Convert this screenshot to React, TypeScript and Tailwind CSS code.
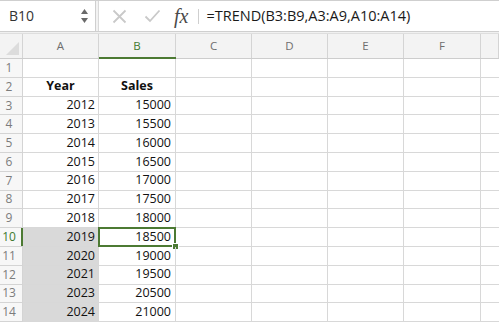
import React from "react";

const cols = ["A", "B", "C", "D", "E", "F", ""];
const colW = ["w-[76px]", "w-[77px]", "w-[76px]", "w-[76px]", "w-[76px]", "w-[77px]", "flex-1"];

const data: [string, string][] = [
  ["", ""],
  ["Year", "Sales"],
  ["2012", "15000"],
  ["2013", "15500"],
  ["2014", "16000"],
  ["2015", "16500"],
  ["2016", "17000"],
  ["2017", "17500"],
  ["2018", "18000"],
  ["2019", "18500"],
  ["2020", "19000"],
  ["2021", "19500"],
  ["2023", "20500"],
  ["2024", "21000"],
];

export default function App() {
  return (
    <div className="w-[499px] h-[324px] overflow-hidden bg-white font-['Open_Sans',sans-serif] text-[#222]">
      {/* formula bar */}
      <div className="flex h-[32px] border-t border-b border-[#cfcfcf]">
        <div className="w-[96px] flex items-center justify-between pl-[9px] pr-[6px] border-r border-[#cfcfcf]">
          <span className="text-[14px] text-[#333] leading-none">B10</span>
          <svg width="9" height="18" viewBox="0 0 9 18">
            <path d="M4.5 2 L8 7 L1 7 Z" fill="#6a6a6a" />
            <path d="M1 11 L8 11 L4.5 16 Z" fill="#6a6a6a" />
          </svg>
        </div>
        <div className="w-[3px] bg-[#f2f2f2] border-r border-[#d9d9d9]" />
        <div className="flex-1 flex items-center">
          <svg className="ml-[13px]" width="15" height="15" viewBox="0 0 15 15">
            <path d="M1.5 1.5 L13.5 13.5 M13.5 1.5 L1.5 13.5" stroke="#c9c9c9" strokeWidth="1.8" fill="none" />
          </svg>
          <svg className="ml-[17px]" width="17" height="14" viewBox="0 0 17 14">
            <path d="M1.5 7.5 L6 12 L15.5 1.5" stroke="#c9c9c9" strokeWidth="1.8" fill="none" />
          </svg>
          <span className="ml-[13px] font-['Liberation_Serif',serif] italic text-[20px] text-[#4a4a4a] leading-none">fx</span>
          <div className="ml-[10px] w-px h-[15px] bg-[#cfcfcf]" />
          <span className="ml-[7px] text-[14.5px] leading-none text-[#1a1a1a]">=TREND(B3:B9,A3:A9,A10:A14)</span>
        </div>
      </div>
      <div className="h-[2px] bg-[#f0f0f0] border-b border-[#dedede]" />
      {/* header row */}
      <div className="flex h-[25px] bg-[#f3f3f3] border-b border-[#cdcdcd]">
        <div className="w-[23px] relative border-r border-[#d4d4d4]">
          <svg className="absolute right-[3px] bottom-[3px]" width="13" height="13" viewBox="0 0 13 13">
            <path d="M13 0 L13 13 L0 13 Z" fill="#dcdcdc" />
          </svg>
        </div>
        {cols.map((c, i) => (
          <div
            key={i}
            className={`${colW[i]} relative flex items-center justify-center text-[11.5px] border-r border-[#d4d4d4] ${c === "B" ? "text-[#3f7a2f]" : "text-[#6e6e6e]"}`}
          >
            {c}
            {c === "B" && <div className="absolute left-0 right-[-1px] bottom-[-1px] h-[2px] bg-[#4c7a33]" />}
          </div>
        ))}
      </div>
      {/* rows */}
      {data.map(([a, b], r) => {
        const rowNum = r + 1;
        const selRow = rowNum === 10;
        const shaded = rowNum >= 10;
        const bold = rowNum === 2;
        return (
          <div key={r} className="flex h-[18.8px] text-[12.5px] text-[#111]">
            <div
              className={`w-[23px] relative flex items-center justify-center pr-[4px] text-[12px] bg-[#f7f7f7] border-r border-b border-[#d4d4d4] ${selRow ? "text-[#3f7a2f]" : "text-[#7c7c7c]"}`}
            >
              {rowNum}
              {selRow && <div className="absolute right-[-1px] top-0 bottom-0 w-[2px] bg-[#4c7a33]" />}
            </div>
            <div
              className={`w-[76px] flex items-center ${bold ? "justify-center font-bold" : "justify-end pr-[3px]"} border-r border-b border-[#d8d8d8] ${shaded ? "bg-[#d9d9d9]" : ""}`}
            >
              {a}
            </div>
            <div
              className={`w-[77px] relative flex items-center ${bold ? "justify-center font-bold" : "justify-end pr-[4px]"} border-r border-b border-[#d8d8d8]`}
            >
              {b}
              {selRow && (
                <>
                  <div className="absolute left-[-1px] top-[-1px] right-[-1px] bottom-[-1px] border-2 border-[#4c7a33]" />
                  <div className="absolute right-[-3px] bottom-[-3px] w-[5px] h-[5px] bg-[#4c7a33] outline outline-1 outline-white" />
                </>
              )}
            </div>
            {[0, 1, 2, 3].map((k) => (
              <div key={k} className={`${k === 3 ? "w-[77px]" : "w-[76px]"} border-r border-b border-[#d8d8d8]`} />
            ))}
            <div className="flex-1 border-b border-[#d8d8d8]" />
          </div>
        );
      })}
    </div>
  );
}
